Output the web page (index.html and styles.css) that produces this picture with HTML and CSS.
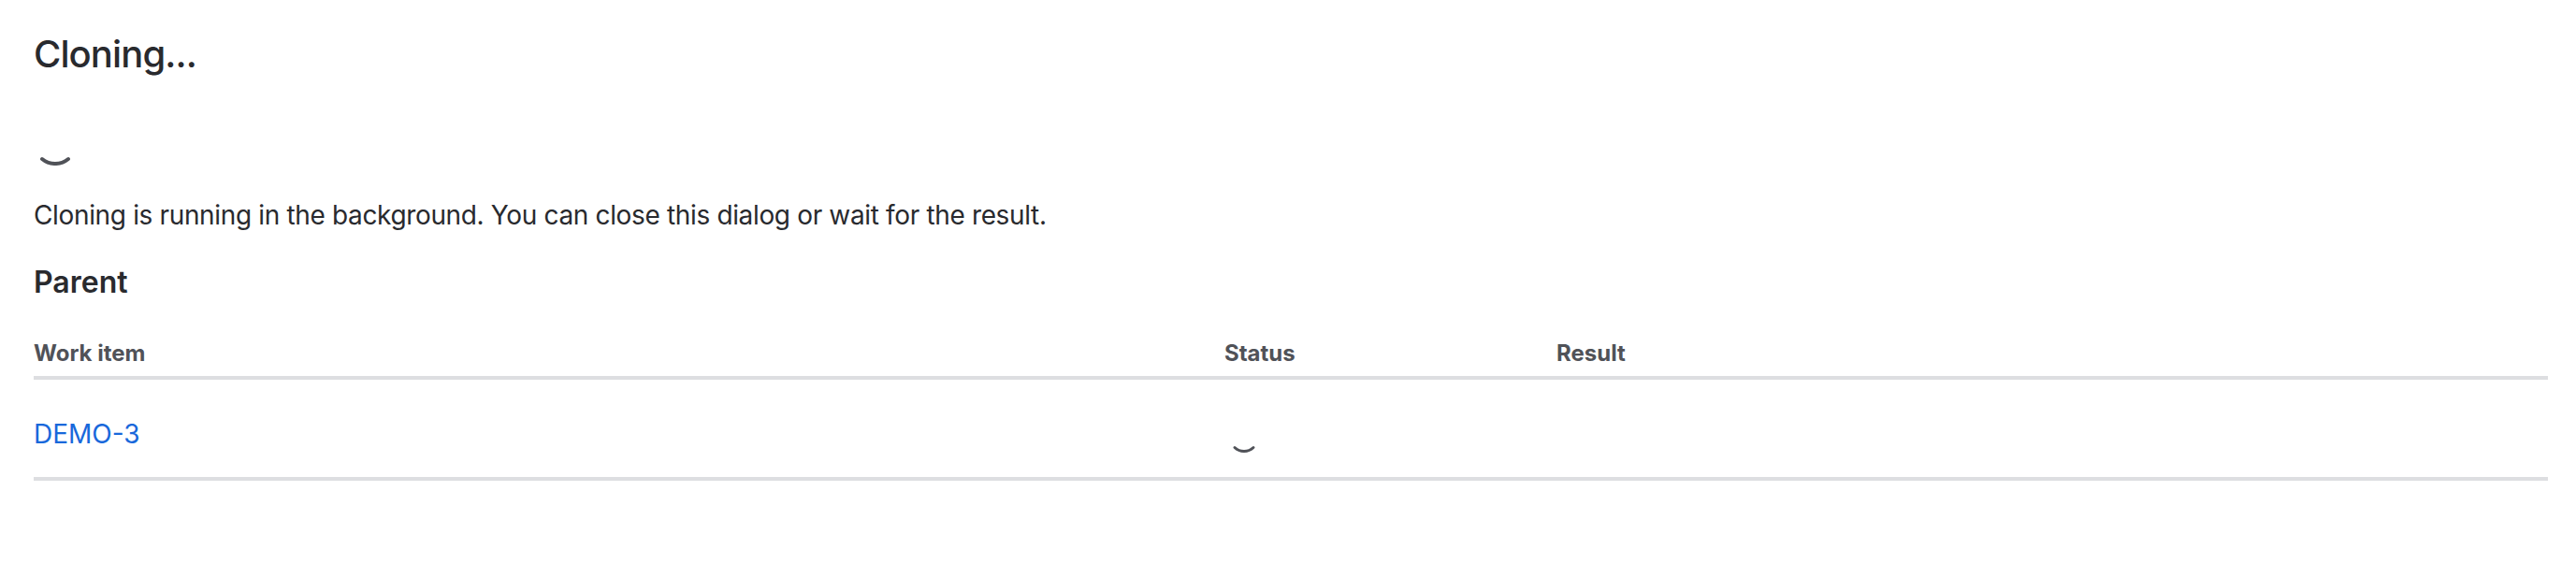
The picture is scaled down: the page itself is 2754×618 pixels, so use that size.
FILE: index.html
```html
<!DOCTYPE html>
<html lang="en">
<head>
    <meta charset="UTF-8">
    <meta name="viewport" content="width=device-width, initial-scale=1.0">
    <title>Cloning</title>
    <link rel="stylesheet" href="styles.css">
</head>
<body>

    <!-- Clone progress dialog -->
    <section class="clone-dialog">
        <h1 class="dialog-title">Cloning...</h1>

        <div class="spinner-main">
            <svg width="48" height="48" viewBox="0 0 48 48">
                <path d="M10 41 A22 22 0 0 0 38 41" fill="none" stroke="#505258" stroke-width="4" stroke-linecap="round"/>
            </svg>
        </div>

        <p class="dialog-text">Cloning is running in the background. You can close this dialog or wait for the result.</p>

        <h2 class="section-title">Parent</h2>

        <div class="clone-table">
            <div class="table-head">
                <div class="cell">Work item</div>
                <div class="cell">Status</div>
                <div class="cell">Result</div>
            </div>
            <div class="table-row">
                <div class="cell"><a href="#" class="issue-link">DEMO-3</a></div>
                <div class="cell status-cell">
                    <svg width="32" height="32" viewBox="0 0 32 32">
                        <path d="M6 26.5 A14.5 14.5 0 0 0 26 26.5" fill="none" stroke="#505258" stroke-width="3" stroke-linecap="round"/>
                    </svg>
                </div>
                <div class="cell"></div>
            </div>
        </div>
    </section>

</body>
</html>
```

FILE: styles.css
```css
/* General styles */
body {
    font-family: Inter, 'Noto Sans', sans-serif;
    margin: 0;
    padding: 0;
    background-color: #fff;
    color: #292a2e;
}

/* Dialog */
.clone-dialog {
    padding: 34px 30px 0 36px;
}

.dialog-title {
    margin: 0;
    font-size: 40px;
    line-height: 48px;
    font-weight: 500;
    letter-spacing: -0.9px;
}

.spinner-main {
    margin-top: 47px;
    margin-left: -1px;
    height: 48px;
}

.spinner-main svg {
    display: block;
}

.dialog-text {
    margin: 33px 0 0;
    font-size: 28px;
    line-height: 40px;
    letter-spacing: -0.35px;
}

.section-title {
    margin: 32px 0 0;
    font-size: 32px;
    line-height: 40px;
    font-weight: 600;
}

/* Table */
.clone-table {
    margin-top: 40px;
}

.table-head,
.table-row {
    display: grid;
    grid-template-columns: 1273px 355px 1fr;
}

.table-head {
    border-bottom: 4px solid #dddee1;
    padding-bottom: 8px;
}

.table-head .cell {
    font-size: 24px;
    line-height: 32px;
    font-weight: 700;
    color: #505258;
}

.table-row {
    height: 108px;
    box-sizing: border-box;
    border-bottom: 4px solid #dddee1;
}

.table-row .cell {
    padding-top: 38px;
    font-size: 28px;
    line-height: 40px;
}

.table-row .status-cell {
    padding-top: 46px;
    padding-left: 5px;
}

.status-cell svg {
    display: block;
}

.issue-link {
    color: #1868db;
    text-decoration: none;
}
```
